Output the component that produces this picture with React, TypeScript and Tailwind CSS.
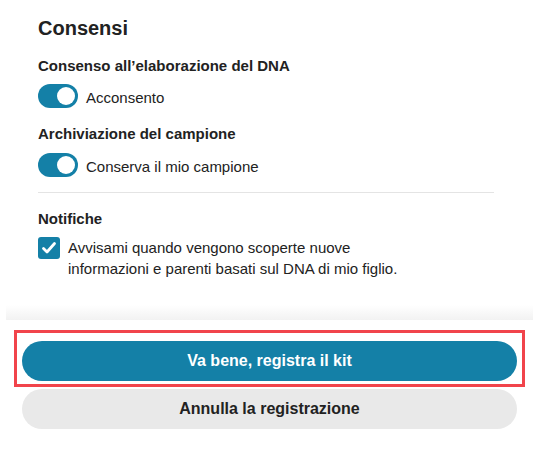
import React from "react";

function Toggle() {
  return (
    <div className="flex h-6 w-10 shrink-0 items-center justify-end rounded-full bg-[#1480a7] p-[3px]">
      <div className="h-[18px] w-[18px] rounded-full bg-white" />
    </div>
  );
}

export default function App() {
  return (
    <div
      className="flex h-[449px] w-[533px] flex-col bg-white text-[#222]"
      style={{ fontFamily: '"Liberation Sans", Arial, sans-serif' }}
    >
      <div className="flex flex-col pl-[38px] pr-[39px] pt-[14px]">
        <h2 className="text-[20px] font-bold leading-[28px]">Consensi</h2>
        <div className="mt-[14px] text-[15px] font-bold leading-[20px]">
          Consenso all’elaborazione del DNA
        </div>
        <div className="mt-2 flex h-6 items-center gap-2">
          <Toggle />
          <span className="pt-[3px] text-[15px] leading-[20px]">Acconsento</span>
        </div>
        <div className="mt-4 text-[15px] font-bold leading-[20px]">
          Archiviazione del campione
        </div>
        <div className="mt-[9px] flex h-6 items-center gap-2">
          <Toggle />
          <span className="pt-[3px] text-[15px] leading-[20px]">Conserva il mio campione</span>
        </div>
        <div className="mt-[15px] h-px bg-[#e4e4e4]" />
        <div className="mt-4 text-[15px] font-bold leading-[20px]">Notifiche</div>
        <div className="mt-2 flex items-start gap-2">
          <div className="flex h-[22px] w-[22px] shrink-0 items-center justify-center rounded-[3px] bg-[#1480a7]">
            <svg width="16" height="16" viewBox="0 0 16 16" fill="none">
              <path
                d="M2.5 8.5l3.5 3.5 7.5-8.5"
                stroke="white"
                strokeWidth="2.8"
                strokeLinecap="round"
                strokeLinejoin="round"
              />
            </svg>
          </div>
          <p className="text-[15px] leading-[21px]">
            Avvisami quando vengono scoperte nuove
            <br />
            informazioni e parenti basati sul DNA di mio figlio.
          </p>
        </div>
      </div>
      <div className="ml-[6px] mt-[26px] h-[15px] bg-gradient-to-b from-white to-[#f2f2f2]" />
      <div className="ml-[6px] flex flex-col gap-2 bg-white px-4 pb-5 pt-[21px]">
        <div className="relative">
          <div className="pointer-events-none absolute -bottom-[6px] -left-2 -right-2 -top-[11px] border-[3px] border-[#f1444b]" />
          <button className="flex h-10 w-full items-center justify-center rounded-full bg-[#1480a7] text-[16px] font-bold text-white">
            Va bene, registra il kit
          </button>
        </div>
        <button className="flex h-10 w-full items-center justify-center rounded-full bg-[#e9e9e9] text-[16px] font-bold text-[#222]">
          Annulla la registrazione
        </button>
      </div>
    </div>
  );
}
